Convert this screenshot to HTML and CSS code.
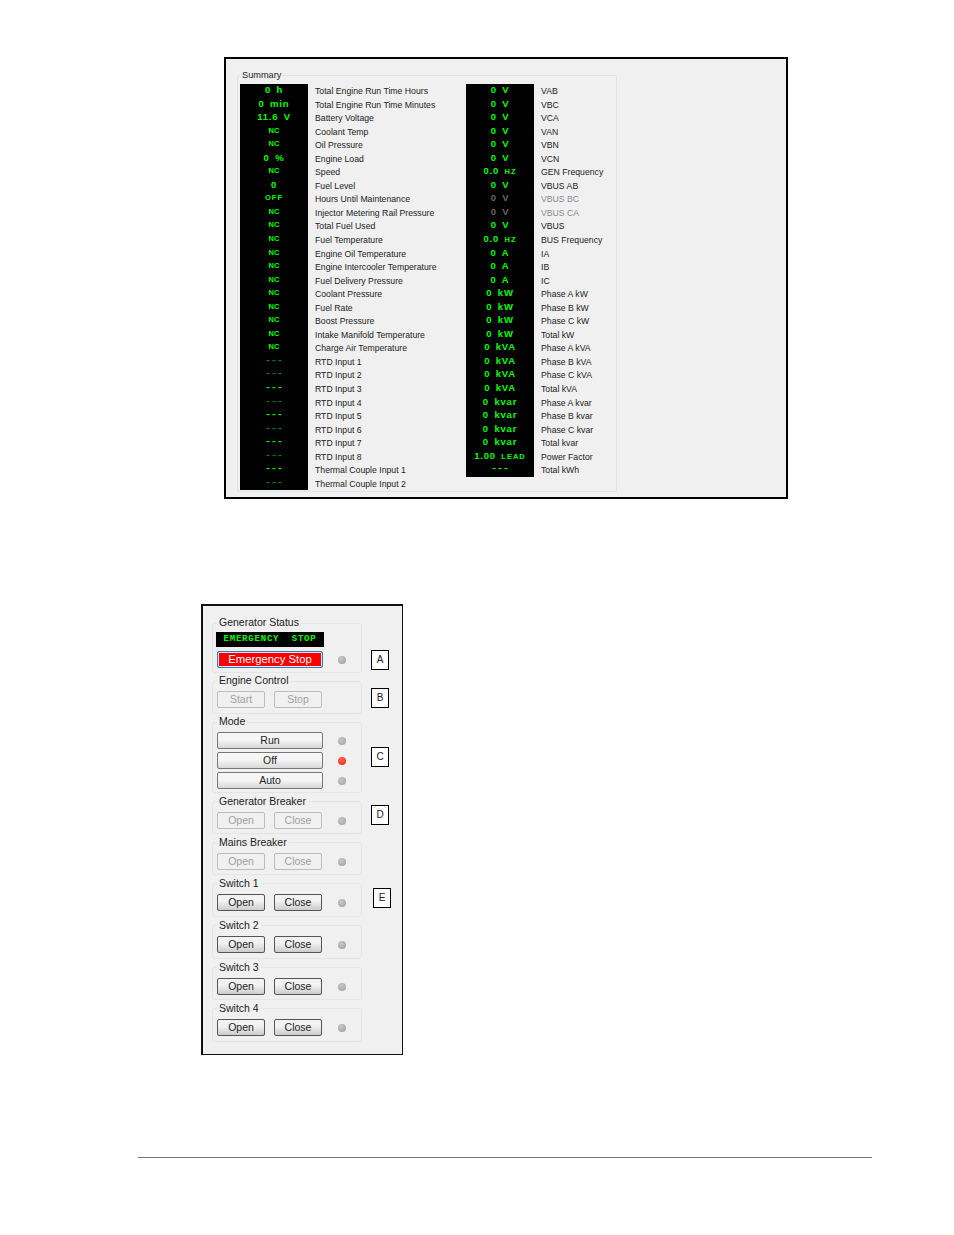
FILE: index.html
```html
<!DOCTYPE html>
<html lang="en">
<head>
    <meta charset="UTF-8">
    <title>Generator Summary and Control</title>
    <link rel="stylesheet" href="styles.css">
</head>

<body>
    <!-- Summary screen -->
    <section class="summary-panel">
        <fieldset class="summary-group">
            <legend>Summary</legend>
            <div class="summary-cols">
                <div class="col col-left">
                    <div class="row"><span class="val">0 h</span><span class="lbl">Total Engine Run Time Hours</span></div>
                    <div class="row"><span class="val">0 min</span><span class="lbl">Total Engine Run Time Minutes</span></div>
                    <div class="row"><span class="val">11.6 V</span><span class="lbl">Battery Voltage</span></div>
                    <div class="row"><span class="val sm">NC</span><span class="lbl">Coolant Temp</span></div>
                    <div class="row"><span class="val sm">NC</span><span class="lbl">Oil Pressure</span></div>
                    <div class="row"><span class="val">0 %</span><span class="lbl">Engine Load</span></div>
                    <div class="row"><span class="val sm">NC</span><span class="lbl">Speed</span></div>
                    <div class="row"><span class="val">0</span><span class="lbl">Fuel Level</span></div>
                    <div class="row"><span class="val sm spaced">OFF</span><span class="lbl">Hours Until Maintenance</span></div>
                    <div class="row"><span class="val sm">NC</span><span class="lbl">Injector Metering Rail Pressure</span></div>
                    <div class="row"><span class="val sm">NC</span><span class="lbl">Total Fuel Used</span></div>
                    <div class="row"><span class="val sm">NC</span><span class="lbl">Fuel Temperature</span></div>
                    <div class="row"><span class="val sm">NC</span><span class="lbl">Engine Oil Temperature</span></div>
                    <div class="row"><span class="val sm">NC</span><span class="lbl">Engine Intercooler Temperature</span></div>
                    <div class="row"><span class="val sm">NC</span><span class="lbl">Fuel Delivery Pressure</span></div>
                    <div class="row"><span class="val sm">NC</span><span class="lbl">Coolant Pressure</span></div>
                    <div class="row"><span class="val sm">NC</span><span class="lbl">Fuel Rate</span></div>
                    <div class="row"><span class="val sm">NC</span><span class="lbl">Boost Pressure</span></div>
                    <div class="row"><span class="val sm">NC</span><span class="lbl">Intake Manifold Temperature</span></div>
                    <div class="row"><span class="val sm">NC</span><span class="lbl">Charge Air Temperature</span></div>
                    <div class="row"><span class="val dash dim">---</span><span class="lbl">RTD Input 1</span></div>
                    <div class="row"><span class="val dash dim">---</span><span class="lbl">RTD Input 2</span></div>
                    <div class="row"><span class="val dash">---</span><span class="lbl">RTD Input 3</span></div>
                    <div class="row"><span class="val dash dim">---</span><span class="lbl">RTD Input 4</span></div>
                    <div class="row"><span class="val dash">---</span><span class="lbl">RTD Input 5</span></div>
                    <div class="row"><span class="val dash dim">---</span><span class="lbl">RTD Input 6</span></div>
                    <div class="row"><span class="val dash">---</span><span class="lbl">RTD Input 7</span></div>
                    <div class="row"><span class="val dash dim">---</span><span class="lbl">RTD Input 8</span></div>
                    <div class="row"><span class="val dash">---</span><span class="lbl">Thermal Couple Input 1</span></div>
                    <div class="row"><span class="val dash dim">---</span><span class="lbl">Thermal Couple Input 2</span></div>
                </div>
                <div class="col">
                    <div class="row"><span class="val">0 V</span><span class="lbl">VAB</span></div>
                    <div class="row"><span class="val">0 V</span><span class="lbl">VBC</span></div>
                    <div class="row"><span class="val">0 V</span><span class="lbl">VCA</span></div>
                    <div class="row"><span class="val">0 V</span><span class="lbl">VAN</span></div>
                    <div class="row"><span class="val">0 V</span><span class="lbl">VBN</span></div>
                    <div class="row"><span class="val">0 V</span><span class="lbl">VCN</span></div>
                    <div class="row"><span class="val">0.0 <small>HZ</small></span><span class="lbl">GEN Frequency</span></div>
                    <div class="row"><span class="val">0 V</span><span class="lbl">VBUS AB</span></div>
                    <div class="row row-dim"><span class="val">0 V</span><span class="lbl">VBUS BC</span></div>
                    <div class="row row-dim"><span class="val">0 V</span><span class="lbl">VBUS CA</span></div>
                    <div class="row"><span class="val">0 V</span><span class="lbl">VBUS</span></div>
                    <div class="row"><span class="val">0.0 <small>HZ</small></span><span class="lbl">BUS Frequency</span></div>
                    <div class="row"><span class="val">0 A</span><span class="lbl">IA</span></div>
                    <div class="row"><span class="val">0 A</span><span class="lbl">IB</span></div>
                    <div class="row"><span class="val">0 A</span><span class="lbl">IC</span></div>
                    <div class="row"><span class="val">0 kW</span><span class="lbl">Phase A kW</span></div>
                    <div class="row"><span class="val">0 kW</span><span class="lbl">Phase B kW</span></div>
                    <div class="row"><span class="val">0 kW</span><span class="lbl">Phase C kW</span></div>
                    <div class="row"><span class="val">0 kW</span><span class="lbl">Total kW</span></div>
                    <div class="row"><span class="val">0 kVA</span><span class="lbl">Phase A kVA</span></div>
                    <div class="row"><span class="val">0 kVA</span><span class="lbl">Phase B kVA</span></div>
                    <div class="row"><span class="val">0 kVA</span><span class="lbl">Phase C kVA</span></div>
                    <div class="row"><span class="val">0 kVA</span><span class="lbl">Total kVA</span></div>
                    <div class="row"><span class="val">0 kvar</span><span class="lbl">Phase A kvar</span></div>
                    <div class="row"><span class="val">0 kvar</span><span class="lbl">Phase B kvar</span></div>
                    <div class="row"><span class="val">0 kvar</span><span class="lbl">Phase C kvar</span></div>
                    <div class="row"><span class="val">0 kvar</span><span class="lbl">Total kvar</span></div>
                    <div class="row"><span class="val">1.00 <small>LEAD</small></span><span class="lbl">Power Factor</span></div>
                    <div class="row"><span class="val dash">---</span><span class="lbl">Total kWh</span></div>
                </div>
            </div>
        </fieldset>
    </section>

    <!-- Control screen -->
    <section class="control-panel">
        <div class="ctl-row">
            <fieldset class="group group-status">
                <legend>Generator Status</legend>
                <div class="status-display">EMERGENCY  STOP</div>
                <div class="btn-line">
                    <button class="btn btn-wide btn-estop">Emergency Stop</button>
                    <span class="led"></span>
                </div>
            </fieldset>
            <span class="tag tag-a">A</span>
        </div>

        <div class="ctl-row">
            <fieldset class="group group-engine">
                <legend>Engine Control</legend>
                <div class="btn-line">
                    <button class="btn btn-off">Start</button>
                    <button class="btn btn-off">Stop</button>
                </div>
            </fieldset>
            <span class="tag tag-b">B</span>
        </div>

        <div class="ctl-row">
            <fieldset class="group group-mode">
                <legend>Mode</legend>
                <div class="btn-line">
                    <button class="btn btn-wide">Run</button>
                    <span class="led"></span>
                </div>
                <div class="btn-line">
                    <button class="btn btn-wide">Off</button>
                    <span class="led led-on"></span>
                </div>
                <div class="btn-line">
                    <button class="btn btn-wide">Auto</button>
                    <span class="led"></span>
                </div>
            </fieldset>
            <span class="tag tag-c">C</span>
        </div>

        <div class="ctl-row">
            <fieldset class="group group-short">
                <legend>Generator Breaker</legend>
                <div class="btn-line">
                    <button class="btn btn-off">Open</button>
                    <button class="btn btn-off">Close</button>
                    <span class="led led-pair"></span>
                </div>
            </fieldset>
            <span class="tag tag-d">D</span>
        </div>

        <div class="ctl-row">
            <fieldset class="group group-short">
                <legend>Mains Breaker</legend>
                <div class="btn-line">
                    <button class="btn btn-off">Open</button>
                    <button class="btn btn-off">Close</button>
                    <span class="led led-pair"></span>
                </div>
            </fieldset>
        </div>

        <div class="ctl-row">
            <fieldset class="group">
                <legend>Switch 1</legend>
                <div class="btn-line">
                    <button class="btn btn-dark">Open</button>
                    <button class="btn btn-dark">Close</button>
                    <span class="led led-pair"></span>
                </div>
            </fieldset>
            <span class="tag tag-e">E</span>
        </div>

        <div class="ctl-row">
            <fieldset class="group">
                <legend>Switch 2</legend>
                <div class="btn-line">
                    <button class="btn btn-dark">Open</button>
                    <button class="btn btn-dark">Close</button>
                    <span class="led led-pair"></span>
                </div>
            </fieldset>
        </div>

        <div class="ctl-row">
            <fieldset class="group group-short">
                <legend>Switch 3</legend>
                <div class="btn-line">
                    <button class="btn btn-dark">Open</button>
                    <button class="btn btn-dark">Close</button>
                    <span class="led led-pair"></span>
                </div>
            </fieldset>
        </div>

        <div class="ctl-row">
            <fieldset class="group">
                <legend>Switch 4</legend>
                <div class="btn-line">
                    <button class="btn btn-dark">Open</button>
                    <button class="btn btn-dark">Close</button>
                    <span class="led led-pair"></span>
                </div>
            </fieldset>
        </div>
    </section>

    <footer class="page-rule"></footer>
</body>
</html>
```

FILE: styles.css
```css
body {
    background-color: #fff;
    font-family: "Liberation Sans", Arial, sans-serif;
    color: #222;
    margin: 0;
    padding: 57px 0 0;
}

fieldset {
    margin: 0;
    min-width: 0;
    box-sizing: border-box;
}

/* Summary screen */

.summary-panel {
    box-sizing: border-box;
    width: 564px;
    height: 442px;
    margin-left: 224px;
    padding: 11px 0 0 11px;
    background-color: #f0f0f0;
    border: 2px solid #000;
}

.summary-group {
    width: 380px;
    height: 422px;
    padding: 4px 0 0 2px;
    border: 1px solid #dce4ec;
    border-radius: 2px;
}

.summary-group legend {
    padding: 0 2px;
    font-size: 9.2px;
    line-height: 10px;
}

.summary-cols {
    display: flex;
}

.col-left {
    width: 226px;
}

.row {
    display: flex;
    height: 13.55px;
    line-height: 13.55px;
}

.val {
    width: 68px;
    margin-right: 7px;
    background-color: #000;
    color: #0f0;
    font-size: 9.5px;
    font-weight: bold;
    line-height: 12px;
    letter-spacing: 0.8px;
    word-spacing: 2px;
    text-align: center;
    white-space: pre;
}

.val small,
.val.sm {
    font-size: 7.5px;
    letter-spacing: 0;
}

.val small,
.val.spaced {
    letter-spacing: 1px;
}

.val.dash {
    font-family: "Liberation Mono", monospace;
    font-size: 9.7px;
    letter-spacing: 0;
}

.val.dim {
    color: #0a8a0a;
}

.lbl {
    position: relative;
    top: 1px;
    font-size: 8.7px;
    white-space: nowrap;
}

.row-dim .val {
    color: #666;
}

.row-dim .lbl {
    color: #868c94;
}

/* Control screen */

.control-panel {
    box-sizing: border-box;
    width: 202px;
    height: 451px;
    margin: 105px 0 0 201px;
    padding: 11px 0 0 9px;
    background-color: #f0f0f0;
    border: 2px solid #111;
    border-right-width: 1px;
    border-bottom-width: 1px;
}

.ctl-row {
    display: flex;
    align-items: flex-start;
    margin-bottom: 2px;
}

.group {
    width: 150px;
    height: 40px;
    padding: 5px 0 0 4px;
    border: 1px solid #e2e6ea;
    border-radius: 3px;
}

.group legend {
    padding: 0 2px;
    font-size: 10.5px;
    line-height: 12px;
}

.group-status legend,
.group-engine legend,
.group-mode legend {
    padding-bottom: 1px;
    line-height: 11px;
}

.group-short {
    height: 39px;
}

.group-status {
    height: 56px;
    padding-top: 3px;
}

.group-engine {
    height: 39px;
    padding-top: 4px;
}

.group-mode {
    height: 77px;
    padding-top: 4px;
}

.status-display {
    width: 108px;
    height: 15px;
    margin: 0 0 4px -1px;
    background-color: #000;
    color: #0f0;
    font-family: "Liberation Mono", monospace;
    font-size: 9px;
    font-weight: bold;
    letter-spacing: 0.8px;
    line-height: 15px;
    text-align: center;
    white-space: pre;
}

.btn-line {
    display: flex;
    align-items: center;
    margin-bottom: 3px;
}

.btn {
    box-sizing: border-box;
    width: 48px;
    height: 17px;
    margin: 0 9px 0 0;
    padding: 0 0 2px;
    font-family: "Liberation Sans", Arial, sans-serif;
    font-size: 10.5px;
    color: #222;
    background: linear-gradient(#f6f6f6 45%, #d8d8d8);
    border: 1px solid #777;
    border-radius: 2px;
}

.btn-wide {
    width: 106px;
    margin-right: 15px;
}

.btn-dark {
    background: linear-gradient(#f2f2f2 40%, #cccccc);
    border-color: #555;
}

.btn-off {
    color: #a0a0a0;
    background: #f0f0f0;
    border-color: #bcbcbc;
}

.btn-estop {
    color: #fff;
    font-size: 11.3px;
    background: #f00;
    border: 1px solid #2f7fb5;
    box-shadow: inset 0 0 0 1px #dfeaf2;
}

.led {
    width: 8px;
    height: 8px;
    border-radius: 50%;
    background: radial-gradient(circle at 40% 35%, #c8c8c8, #9c9c9c);
}

.led-pair {
    margin-left: 7px;
}

.led-on {
    background: radial-gradient(circle at 40% 35%, #ff6a50, #f01c10);
}

.tag {
    box-sizing: border-box;
    width: 18px;
    height: 20px;
    margin-left: 9px;
    background-color: #fff;
    border: 1px solid #000;
    font-size: 10px;
    line-height: 18px;
    text-align: center;
}

.tag-a {
    margin-top: 33px;
}

.tag-b {
    margin-top: 13px;
}

.tag-c {
    margin-top: 31px;
}

.tag-d {
    margin-top: 10px;
}

.tag-e {
    margin-left: 11px;
    margin-top: 11px;
}

.page-rule {
    width: 734px;
    height: 1px;
    margin: 102px 0 0 138px;
    background-color: #777;
}
```
